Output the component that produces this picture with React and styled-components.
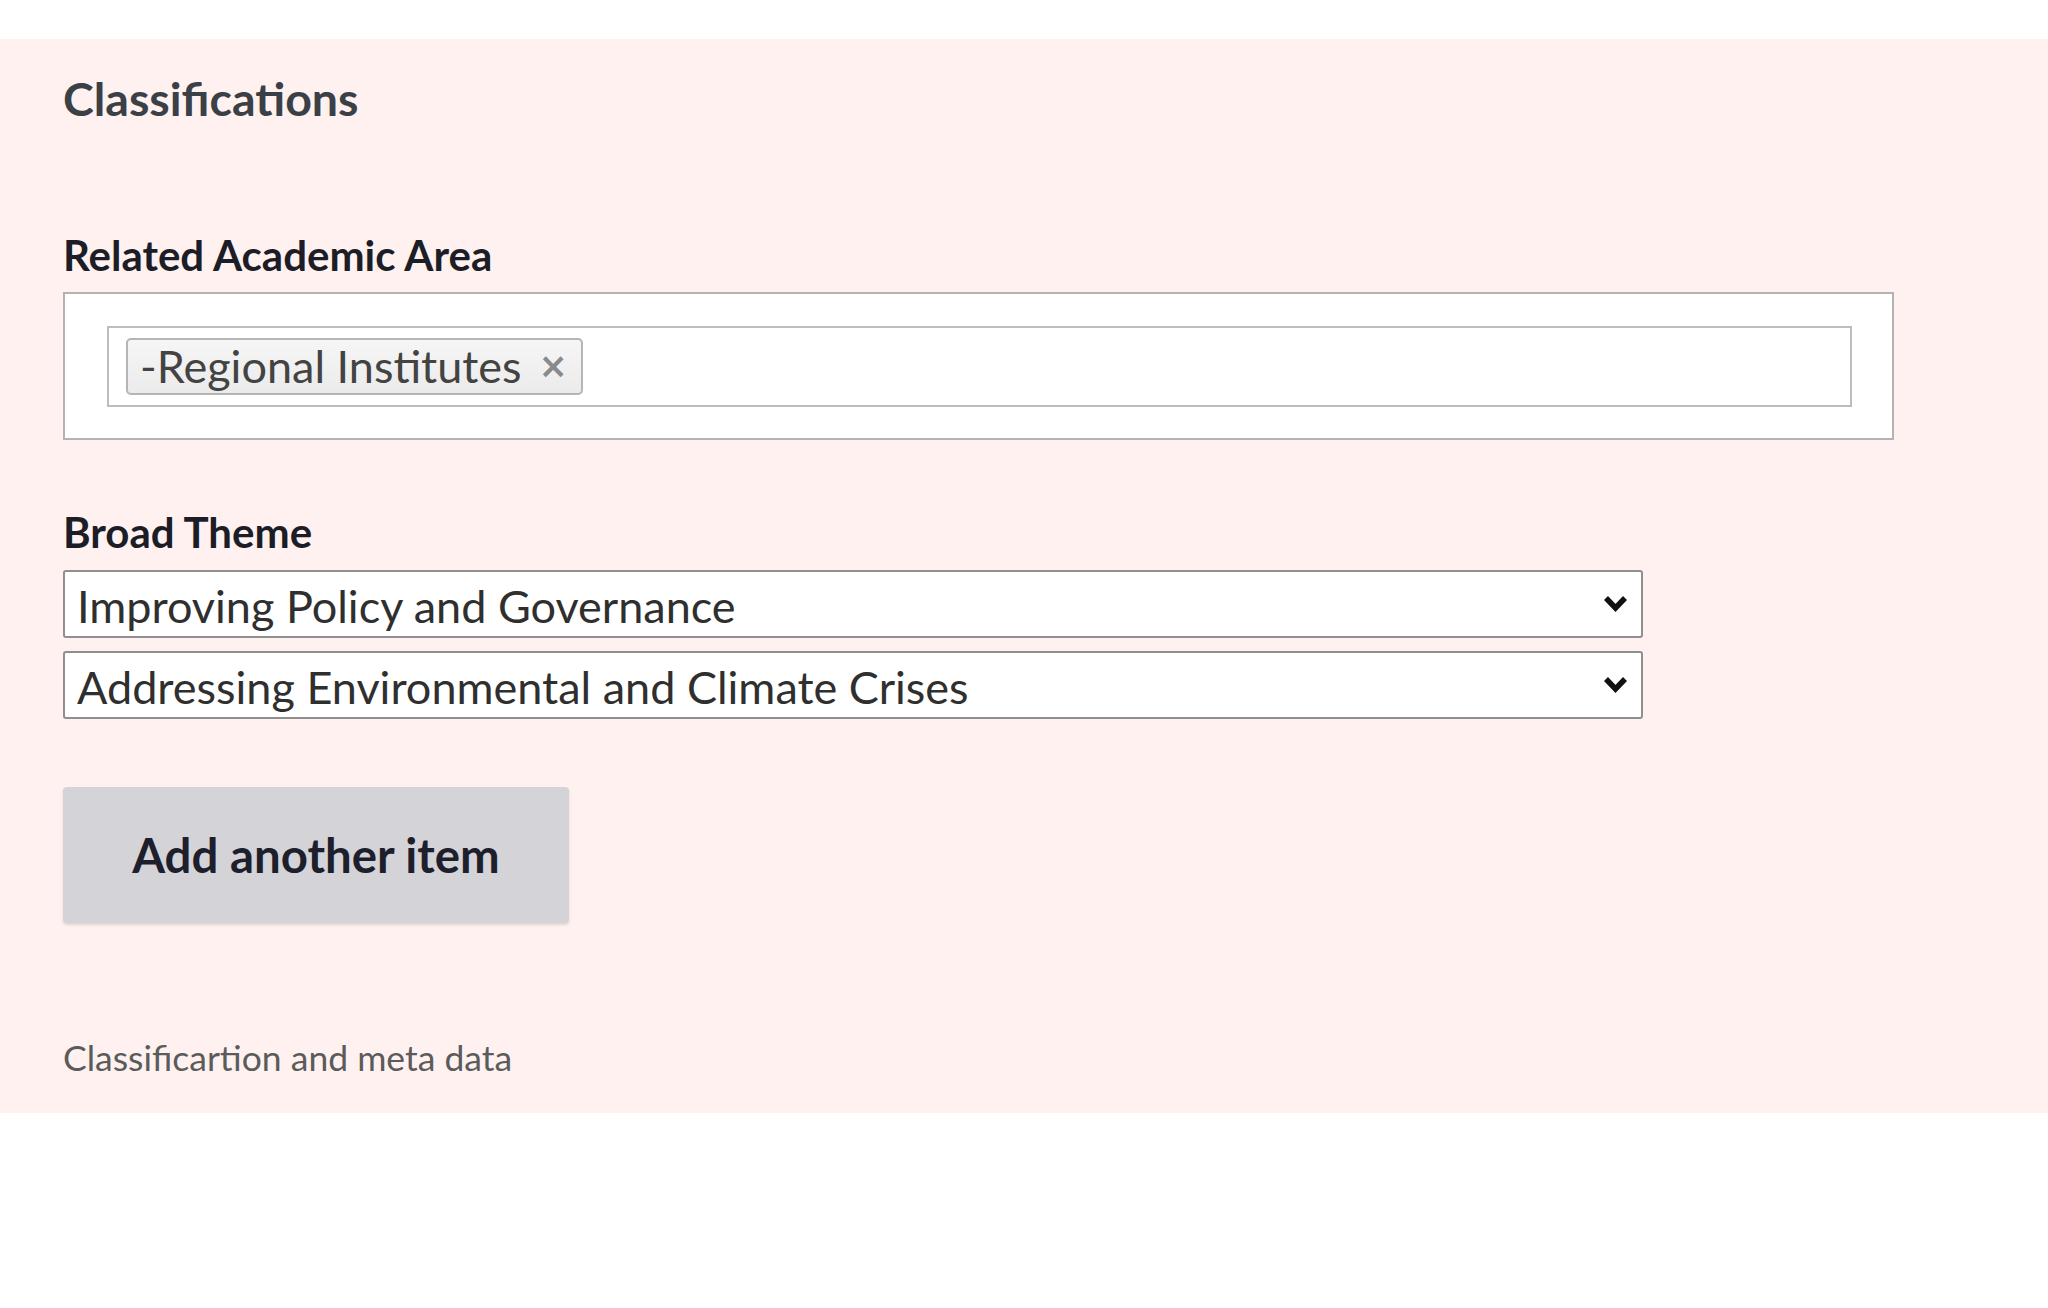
import React from 'react';
import styled, { createGlobalStyle } from 'styled-components';

const GlobalStyle = createGlobalStyle`
  html, body {
    margin: 0;
    padding: 0;
    background: #ffffff;
  }
  body {
    font-family: Lato, "Open Sans", "Noto Sans", sans-serif;
    color: #333;
  }
`;

const Page = styled.div`
  padding-top: 39px;
`;

const Section = styled.section`
  background: #fef1f0;
  padding: 36px 63px 38px;
`;

const Heading = styled.h2`
  margin: 0;
  font-size: 46.5px;
  line-height: 1;
  font-weight: 700;
  color: #3b3f46;
`;

const FieldLabel = styled.div`
  margin-top: ${p => p.$top}px;
  font-size: 42px;
  line-height: 1;
  font-weight: 700;
  color: #1c1d26;
`;

const TagBox = styled.div`
  margin-top: 16px;
  width: 1831px;
  height: 148px;
  box-sizing: border-box;
  padding: 32px 40px 31px 42px;
  background: #fff;
  border: 2px solid #b3b3b3;
`;

const TagInput = styled.div`
  height: 81px;
  box-sizing: border-box;
  display: flex;
  align-items: flex-start;
  padding: 10px 17px;
  border: 2px solid #bdbdbd;
  background: #fff;
`;

const Tag = styled.span`
  display: inline-flex;
  align-items: center;
  gap: 17px;
  height: 57px;
  box-sizing: border-box;
  padding: 0 13px 0 12px;
  border: 2px solid #b5b5b5;
  border-radius: 5px;
  background: linear-gradient(#f6f6f6, #ebebeb);
  font-size: 45px;
  line-height: 1;
  color: #434343;
`;

const TagRemove = styled.span`
  font-family: "DejaVu Sans", sans-serif;
  font-size: 35px;
  font-weight: 700;
  color: #8a8a8a;
  cursor: pointer;
`;

const SelectList = styled.div`
  margin-top: 17px;
  display: flex;
  flex-direction: column;
  gap: 13px;
`;

const SelectField = styled.div`
  width: 1580px;
  height: 68px;
  box-sizing: border-box;
  display: flex;
  align-items: center;
  justify-content: space-between;
  padding: 6px 13px 0 12px;
  background: #fff;
  border: 2px solid #8f8f8f;
  border-radius: 3px;
  font-size: 45px;
  line-height: 1;
  color: #2f2f2f;

  svg {
    margin-top: -6px;
  }
`;

const AddButton = styled.button`
  margin-top: 68px;
  width: 506px;
  height: 136px;
  border: none;
  border-radius: 4px;
  background: #d4d4d8;
  box-shadow: 0 2px 3px rgba(0, 0, 0, 0.12);
  font-family: inherit;
  font-size: 47.4px;
  font-weight: 700;
  color: #1e1f2c;
  cursor: pointer;
`;

const Note = styled.p`
  margin: 117px 0 0;
  font-size: 35.5px;
  line-height: 1;
  color: #5b5b5b;
`;

const Chevron = () => (
  <svg width="25" height="18" viewBox="0 0 25 18">
    <path d="M3 3 L12.5 13 L22 3" fill="none" stroke="#111" strokeWidth="5.5" />
  </svg>
);

const themes = ['Improving Policy and Governance', 'Addressing Environmental and Climate Crises'];

export default function App() {
  return (
    <>
      <GlobalStyle />
      <Page>
        <Section>
          <Heading>Classifications</Heading>
          <FieldLabel $top={112}>Related Academic Area</FieldLabel>
          <TagBox>
            <TagInput>
              <Tag>
                -Regional Institutes
                <TagRemove>×</TagRemove>
              </Tag>
            </TagInput>
          </TagBox>
          <FieldLabel $top={71}>Broad Theme</FieldLabel>
          <SelectList>
            {themes.map(t => (
              <SelectField key={t}>
                <span>{t}</span>
                <Chevron />
              </SelectField>
            ))}
          </SelectList>
          <AddButton type="button">Add another item</AddButton>
          <Note>Classificartion and meta data</Note>
        </Section>
      </Page>
    </>
  );
}
